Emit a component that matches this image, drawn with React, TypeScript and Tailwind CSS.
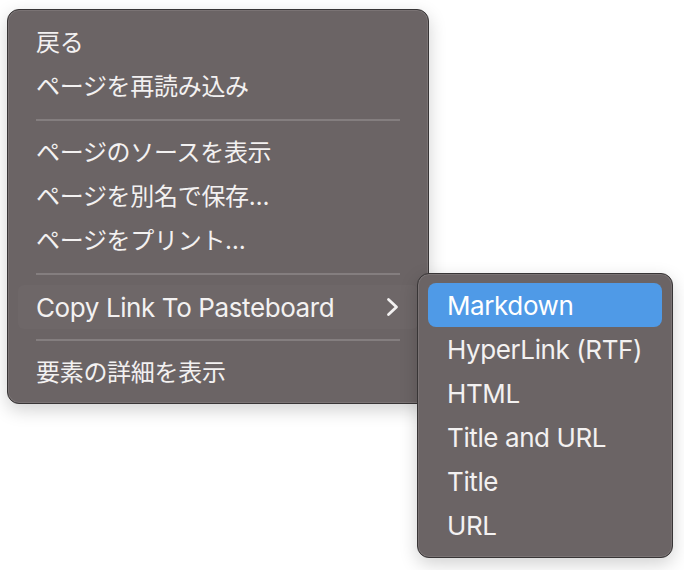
import { Fragment } from "react";

type Item = { label: string; jp?: boolean; submenu?: boolean; hover?: boolean } | "sep";

const mainItems: Item[] = [
  { label: "戻る", jp: true },
  { label: "ページを再読み込み", jp: true },
  "sep",
  { label: "ページのソースを表示", jp: true },
  { label: "ページを別名で保存…", jp: true },
  { label: "ページをプリント…", jp: true },
  "sep",
  { label: "Copy Link To Pasteboard", submenu: true, hover: true },
  "sep",
  { label: "要素の詳細を表示", jp: true },
];

const subItems = ["Markdown", "HyperLink (RTF)", "HTML", "Title and URL", "Title", "URL"];

const latin = "font-['Inter','Liberation_Sans',sans-serif] text-[26px] tracking-[-0.4px]";
const japanese =
  "font-['Inter','Noto_Sans_CJK_JP',sans-serif] text-[24px] tracking-[-0.3px]";

function Chevron() {
  return (
    <svg width="16" height="20" viewBox="0 0 16 20" className="text-[#f3f1f1]">
      <path d="M4.5 2.5 L12.5 10 L4.5 17.5" fill="none" stroke="currentColor" strokeWidth="2.8" strokeLinecap="round" strokeLinejoin="round" />
    </svg>
  );
}

export default function App() {
  return (
    <div className="relative w-[684px] h-[570px] bg-white overflow-hidden pt-[9px] pl-[7px]">
      {/* Main context menu */}
      <div className="w-[422px] rounded-[12px] border border-[#383536] bg-[#6b6465] px-[10px] pt-[11px] pb-[8px] shadow-[0_6px_18px_rgba(0,0,0,0.18),inset_0_0_0_1px_rgba(255,255,255,0.1)]">
        {mainItems.map((item, i) =>
          item === "sep" ? (
            <div key={i} className="h-[22px] flex items-center px-[18px]">
              <div className="h-[2px] w-full bg-[#847e7f]" />
            </div>
          ) : (
            <div
              key={i}
              className={`h-[44px] flex items-center justify-between pl-[18px] pr-[18px] rounded-[6px] text-[#f3f1f1] ${
                item.hover ? "bg-[#6e6768]" : ""
              }`}
            >
              <span className={item.jp ? japanese : latin}>{item.label}</span>
              {item.submenu && <Chevron />}
            </div>
          )
        )}
      </div>

      {/* Submenu */}
      <div className="absolute left-[417px] top-[273px] w-[256px] rounded-[12px] border border-[#383536] bg-[#6b6465] px-[10px] pt-[9px] pb-[10px] shadow-[0_6px_18px_rgba(0,0,0,0.18),inset_0_0_0_1px_rgba(255,255,255,0.1)]">
        {subItems.map((label, i) => (
          <Fragment key={label}>
            <div
              className={`h-[44px] flex items-center pl-[19px] rounded-[8px] ${
                i === 0 ? "bg-[#4f9ae7] text-white" : "text-[#f3f1f1]"
              }`}
            >
              <span className={latin}>{label}</span>
            </div>
          </Fragment>
        ))}
      </div>
    </div>
  );
}
